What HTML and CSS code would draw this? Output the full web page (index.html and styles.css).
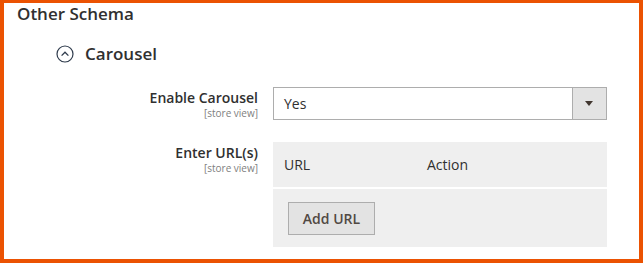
FILE: index.html
```html
<!DOCTYPE html>
<html lang="en">
<head>
  <meta charset="UTF-8">
  <title>Other Schema</title>
  <link rel="stylesheet" href="styles.css">
</head>
<body>
  <div class="frame">
    <h2 class="section-title">Other Schema</h2>

    <div class="group-title">
      <svg class="collapse-icon" width="18" height="18" viewBox="0 0 18 18">
        <circle cx="9" cy="9" r="8" fill="none" stroke="#2f3b4c" stroke-width="1.2"/>
        <path d="M5.6 10.6 L9 7.2 L12.4 10.6" fill="none" stroke="#2f3b4c" stroke-width="1.3"/>
      </svg>
      <span>Carousel</span>
    </div>

    <div class="field">
      <div class="field-label">
        <span class="label">Enable Carousel</span>
        <span class="scope">[store view]</span>
      </div>
      <div class="select">
        <span class="select-value">Yes</span>
        <span class="select-arrow"></span>
      </div>
    </div>

    <div class="field">
      <div class="field-label">
        <span class="label">Enter URL(s)</span>
        <span class="scope">[store view]</span>
      </div>
      <div class="url-table">
        <div class="url-head">
          <span class="col-url">URL</span>
          <span class="col-action">Action</span>
        </div>
        <div class="url-body">
          <button class="btn">Add URL</button>
        </div>
      </div>
    </div>
  </div>
</body>
</html>
```

FILE: styles.css
```css
/* Base */
body {
  margin: 0;
  font-family: "Open Sans", "Liberation Sans", sans-serif;
  color: #303030;
  background-color: #fff;
}
.frame {
  box-sizing: border-box;
  width: 643px;
  height: 263px;
  border: 4px solid #eb5202;
  border-top-width: 3px;
  padding: 0 0 0 13px;
  overflow: hidden;
}
.section-title {
  margin: 0;
  font-size: 17px;
  font-weight: 600;
  line-height: 22px;
}
/* Group */
.group-title {
  display: flex;
  align-items: center;
  gap: 11px;
  margin: 18px 0 0 39px;
  font-size: 17px;
  font-weight: 600;
  line-height: 22px;
}
.collapse-icon {
  display: block;
}
/* Fields */
.field {
  display: grid;
  grid-template-columns: 241px 334px;
  column-gap: 15px;
  margin-top: 22px;
}
.field + .field {
  margin-top: 22px;
}
.field-label {
  display: flex;
  flex-direction: column;
  align-items: flex-end;
  padding-top: 2px;
}
.label {
  font-size: 14px;
  font-weight: 600;
  line-height: 18px;
}
.scope {
  font-size: 10px;
  line-height: 12px;
  color: #808080;
}
/* Select */
.select {
  box-sizing: border-box;
  height: 33px;
  display: flex;
  align-items: center;
  border: 1px solid #adadad;
  background-color: #fff;
}
.select-value {
  flex: 1;
  padding-left: 10px;
  font-size: 14px;
}
.select-arrow {
  box-sizing: border-box;
  width: 34px;
  height: 100%;
  border-left: 1px solid #adadad;
  background-color: #e3e3e3;
  position: relative;
}
.select-arrow::after {
  content: "";
  position: absolute;
  left: 12px;
  top: 13px;
  border-left: 4px solid transparent;
  border-right: 4px solid transparent;
  border-top: 5px solid #41362f;
}
/* URL table */
.url-table {
  background-color: #efefef;
  height: 105px;
}
.url-head {
  display: flex;
  height: 45px;
  align-items: center;
  border-bottom: 2px solid #fff;
  font-size: 14px;
}
.col-url {
  width: 143px;
  padding-left: 11px;
}
.url-body {
  padding: 13px 0 0 15px;
}
.btn {
  box-sizing: border-box;
  width: 87px;
  height: 33px;
  border: 1px solid #adadad;
  background-color: #e3e3e3;
  color: #514943;
  font-family: inherit;
  font-size: 14px;
  font-weight: 600;
  padding: 0;
}
```
